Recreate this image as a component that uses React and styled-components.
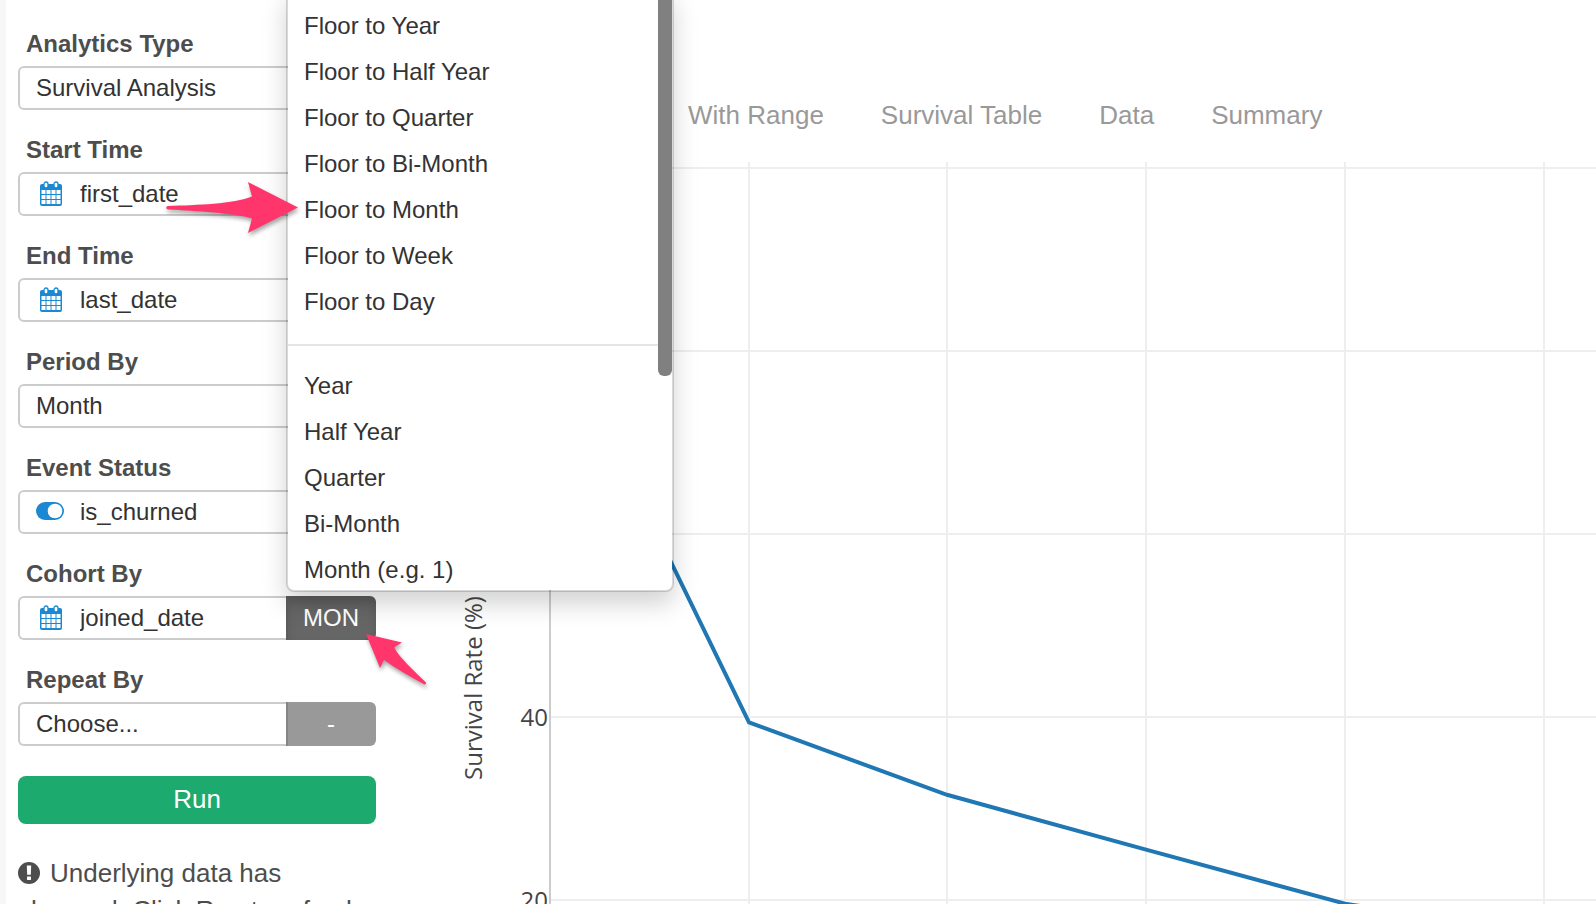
import styled, { createGlobalStyle } from 'styled-components'

const GlobalStyle = createGlobalStyle`
  * {
    box-sizing: border-box;
  }

  body {
    margin: 0;
    background: #fff;
    font-family: 'Liberation Sans', Arial, sans-serif;
    font-size: 24px;
    color: #333;
  }
`

const Page = styled.div`
  display: flex;
  height: 100vh;
  overflow: hidden;
`

const Sidebar = styled.aside`
  flex: none;
  width: 440px;
  padding: 27px 64px 0 12px;
  border-left: 6px solid #f7f7f7;
`

const Group = styled.div`
  margin-bottom: 23px;
`

const Label = styled.label`
  display: block;
  margin: 0 0 5px 8px;
  font-weight: 700;
  line-height: 34px;
  color: #4d4d4d;
`

const InputRow = styled.div`
  position: relative;
  display: flex;
  height: 44px;
`

const Box = styled.div`
  flex: 1;
  display: flex;
  align-items: center;
  gap: 16px;
  min-width: 0;
  padding: 0 0 2px 16px;
  border: 2px solid #ccc;
  border-radius: ${({ $joined }) => ($joined ? '6px 0 0 6px' : '6px')};
  border-right-width: ${({ $joined }) => ($joined ? '0' : '2px')};
`

const IconSlot = styled.span`
  display: flex;
  justify-content: center;
  width: 28px;
`

const Select = styled.select`
  flex: 1;
  min-width: 0;
  height: 38px;
  padding: 0;
  border: 0;
  background: none;
  appearance: none;
  font: inherit;
  color: inherit;
`

const Addon = styled.button`
  width: 90px;
  padding: 0 2px 0 0;
  border: 0;
  border-left: 2px solid ${({ $active }) => ($active ? '#5c5c5c' : '#858585')};
  border-radius: 0 6px 6px 0;
  background: ${({ $active }) => ($active ? '#666' : '#999')};
  box-shadow: ${({ $active }) =>
    $active ? 'inset 0 6px 10px rgba(0, 0, 0, 0.125)' : 'none'};
  font: inherit;
  color: #fff;
`

const RunButton = styled.button`
  width: 100%;
  height: 48px;
  margin-top: 7px;
  padding: 0 0 2px;
  border: 0;
  border-radius: 8px;
  background: #1caa6e;
  font: inherit;
  font-size: 26px;
  color: #fff;
`

const Notice = styled.p`
  margin: 31px 0 0;
  font-size: 26px;
  line-height: 37px;
  color: #4d4d4d;

  svg {
    margin-right: 10px;
    vertical-align: -2px;
  }
`

const Menu = styled.div`
  position: absolute;
  z-index: 1;
  left: 268px;
  bottom: 48px;
  width: 388px;
  height: 604px;
  padding-top: 13px;
  overflow: hidden;
  border: 2px solid rgba(0, 0, 0, 0.15);
  border-radius: 8px;
  background: #fff;
  background-clip: padding-box;
  box-shadow: 0 12px 24px rgba(0, 0, 0, 0.175);
`

const MenuList = styled.ul`
  margin: 0;
  padding: 0;
  list-style: none;

  & + & {
    margin-top: 19px;
    padding-top: 17px;
    border-top: 2px solid #e5e5e5;
  }
`

const MenuItem = styled.button`
  display: block;
  width: 100%;
  height: 46px;
  padding: 0 16px;
  border: 0;
  background: none;
  font: inherit;
  color: inherit;
  text-align: left;
`

const ScrollThumb = styled.div`
  position: absolute;
  top: 0;
  right: 0;
  width: 14px;
  height: 386px;
  border-radius: 6px;
  background: #808080;
`

const Arrow = styled.svg`
  position: absolute;
  z-index: 2;
  left: ${({ $left }) => $left}px;
  top: ${({ $top }) => $top}px;
  overflow: visible;
  fill: #ff356c;
  filter: drop-shadow(1px 3px 2px rgba(0, 0, 0, 0.35));
  pointer-events: none;
`

const Main = styled.main`
  flex: 1;
  display: flex;
  flex-direction: column;
  min-width: 0;
`

const Tabs = styled.nav`
  display: flex;
  gap: 57px;
  padding: 97px 0 6px 248px;
`

const Tab = styled.a`
  font-size: 26px;
  line-height: 37px;
  color: #999;
  text-decoration: none;
  white-space: nowrap;
`

const Plot = styled.svg`
  flex: 1;
  width: 100%;
  min-height: 0;
  font-family: 'Open Sans', sans-serif;
  font-size: 24px;
  fill: #444;
`

const CalendarIcon = () => (
  <svg width='24' height='25' viewBox='-2 0 24 25'>
    <rect y='3' width='22' height='22' rx='2' fill='#1a88d2' />
    <g fill='#fff' stroke='#1a88d2' strokeWidth='1.3'>
      <rect x='4' y='1' width='4' height='6' rx='2' />
      <rect x='14' y='1' width='4' height='6' rx='2' />
    </g>
    <g fill='#fff'>
      {[9, 14, 19].map(y =>
        [1, 6, 11, 16].map(x => (
          <rect key={`${x}-${y}`} x={x + 0.5} y={y} width='4' height='4' />
        ))
      )}
    </g>
  </svg>
)

const ToggleIcon = () => (
  <svg width='28' height='18' viewBox='0 0 28 18'>
    <rect width='28' height='18' rx='9' fill='#1a88d2' />
    <circle cx='19' cy='9' r='7.3' fill='#fff' />
  </svg>
)

const WarningIcon = () => (
  <svg width='22' height='22' viewBox='0 0 22 22'>
    <circle cx='11' cy='11' r='11' fill='#4d4d4d' />
    <path d='M8.800 3.500h4.400l-.4 9.300H9.200z' fill='#fff' />
    <rect x='9' y='14.5' width='4' height='3.5' rx='.5' fill='#fff' />
  </svg>
)

const icons = {
  date: <CalendarIcon />,
  logical: <ToggleIcon />,
}

const Field = ({ id, label, value, type, addon, active, children }) => (
  <Group>
    <Label htmlFor={id}>{label}</Label>
    <InputRow>
      <Box $joined={Boolean(addon)}>
        {type && <IconSlot>{icons[type]}</IconSlot>}
        <Select id={id}>
          <option>{value}</option>
        </Select>
      </Box>
      {addon && (
        <Addon type='button' $active={active}>
          {addon}
        </Addon>
      )}
      {children}
    </InputRow>
  </Group>
)

const floorUnits = ['Year', 'Half Year', 'Quarter', 'Bi-Month', 'Month', 'Week', 'Day']
const partUnits = ['Year', 'Half Year', 'Quarter', 'Bi-Month', 'Month (e.g. 1)']

const UnitMenu = () => (
  <Menu>
    <MenuList>
      {floorUnits.map(unit => (
        <li key={unit}>
          <MenuItem type='button'>Floor to {unit}</MenuItem>
        </li>
      ))}
    </MenuList>
    <MenuList>
      {partUnits.map(unit => (
        <li key={unit}>
          <MenuItem type='button'>{unit}</MenuItem>
        </li>
      ))}
    </MenuList>
    <ScrollThumb />
  </Menu>
)

const tabs = ['With Range', 'Survival Table', 'Data', 'Summary']

// survival rate per month
const rates = [84.1, 39.4, 31.5, 25.5, 19.6, 16.2]
const ticks = [100, 80, 60, 40, 20]

const scaleX = month => Math.round(110 + month * 198.7)
const scaleY = rate => 28 + (100 - rate) * 9.15

const SurvivalChart = () => (
  <Plot>
    {ticks.map(tick => (
      <line
        key={tick}
        x1={scaleX(0)}
        x2='100%'
        y1={scaleY(tick)}
        y2={scaleY(tick)}
        stroke='#eee'
        strokeWidth='2'
      />
    ))}
    {rates.map((rate, month) => (
      <line
        key={month}
        x1={scaleX(month)}
        x2={scaleX(month)}
        y1='22'
        y2='100%'
        stroke={month === 0 ? '#ccc' : '#eee'}
        strokeWidth='2'
      />
    ))}
    <polyline
      points={rates.map((rate, month) => `${scaleX(month)},${scaleY(rate)}`).join(' ')}
      fill='none'
      stroke='#1f77b4'
      strokeWidth='4'
    />
    {ticks
      .filter(tick => tick <= 40)
      .map(tick => (
        <text key={tick} x={scaleX(0) - 2} y={scaleY(tick) + 9} textAnchor='end'>
          {tick}
        </text>
      ))}
    <text transform='translate(42 548) rotate(-90)' textAnchor='middle'>
      Survival Rate (%)
    </text>
  </Plot>
)

const App = () => (
  <>
    <GlobalStyle />
    <Page>
      <Sidebar>
        <Field id='analytics-type' label='Analytics Type' value='Survival Analysis' />
        <Field id='start-time' label='Start Time' value='first_date' type='date'>
          <Arrow $left={148} $top={10} width='132' height='52'>
            <path d='M2 24C30 23 68 22 86 14.500L82 0L132 25.500L82 51L86 36.500C68 31 30 29 2 27.500A1.700 1.700 0 0 1 2 24Z' />
          </Arrow>
        </Field>
        <Field id='end-time' label='End Time' value='last_date' type='date' />
        <Field id='period-by' label='Period By' value='Month' />
        <Field id='event-status' label='Event Status' value='is_churned' type='logical' />
        <Field
          id='cohort-by'
          label='Cohort By'
          value='joined_date'
          type='date'
          addon='MON'
          active
        >
          <UnitMenu />
          <Arrow $left={348} $top={38} width='60' height='51'>
            <path d='M0 0L36 8.500L28 13.500C34 24 47 36 59.500 48A1.400 1.400 0 0 1 57.500 50C43 42 29 34 18 26L14 34Z' />
          </Arrow>
        </Field>
        <Field id='repeat-by' label='Repeat By' value='Choose...' addon='-' />
        <RunButton type='button'>Run</RunButton>
        <Notice>
          <WarningIcon />
          Underlying data has changed. Click Run to refresh
        </Notice>
      </Sidebar>
      <Main>
        <Tabs>
          {tabs.map(tab => (
            <Tab key={tab} href='#'>
              {tab}
            </Tab>
          ))}
        </Tabs>
        <SurvivalChart />
      </Main>
    </Page>
  </>
)

export default App
